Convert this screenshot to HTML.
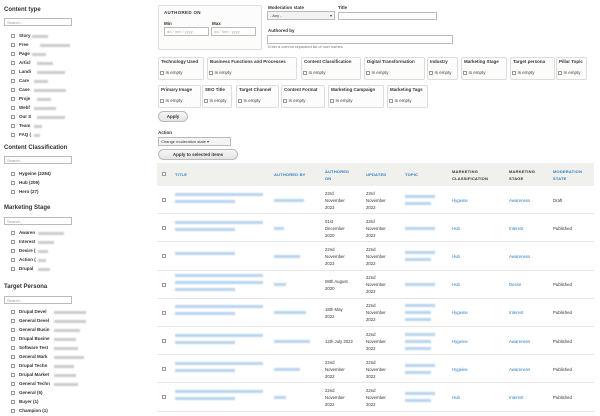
<!DOCTYPE html>
<html><head><meta charset="utf-8"><style>
*{margin:0;padding:0;box-sizing:border-box}
body{width:600px;height:416px;overflow:hidden;background:#fff;font-family:"Liberation Sans","DejaVu Sans",sans-serif;color:#222;position:relative}
.a{position:absolute;white-space:nowrap}
.h{font-weight:bold;font-size:6px;color:#333}
.s{font-size:4.5px}
.b{font-weight:bold;font-size:4.5px;color:#333}
.cb{position:absolute;width:4px;height:4px;border:0.6px solid #999;background:#fff}
.in{position:absolute;border:0.6px solid #bbb;background:#fff;font-size:4px;color:#999;padding:1px 2px}
.bl{position:absolute;background:#ccc;filter:blur(0.8px);height:3px}
.bb{position:absolute;background:#b8d5ee;filter:blur(0.8px);height:3px}
.fs{position:absolute;border:0.6px solid #ddd;border-radius:2px;background:#fcfcfa}
.btn{position:absolute;border:0.6px solid #bbb;border-radius:6px;background:linear-gradient(#f6f6f4,#e4e4e2);font-size:4.5px;font-weight:bold;text-align:center;color:#333}
.th{font-size:4px;font-weight:bold;color:#2b7dc4;letter-spacing:.2px}
.thk{font-size:4px;font-weight:bold;color:#333;letter-spacing:.2px}
.row{position:absolute;left:157px;width:437px;border-bottom:0.6px solid #e6e6e6}
.t{font-size:4.3px;color:#333;line-height:7px}
</style></head><body>

<div class="a h" style="left:4px;top:7px">Content type</div>
<div class="in" style="left:4px;top:18px;width:68px;height:8px">Search...</div>
<div class="a h" style="left:4px;top:145px">Content Classification</div>
<div class="in" style="left:4px;top:156px;width:68px;height:8px">Search...</div>
<div class="a h" style="left:4px;top:205px">Marketing Stage</div>
<div class="in" style="left:4px;top:217px;width:68px;height:8px">Search...</div>
<div class="a h" style="left:4px;top:284px">Target Persona</div>
<div class="in" style="left:4px;top:296px;width:68px;height:8px">Search...</div>

<div id="side"></div>

<div class="fs" style="left:158px;top:5px;width:104px;height:45px"></div>
<div class="a b" style="left:164px;top:10px;letter-spacing:.3px">AUTHORED ON</div>
<div class="a b" style="left:164px;top:21px">Min</div>
<div class="a b" style="left:212px;top:21px">Max</div>
<div class="in" style="left:164px;top:27px;width:45px;height:9px;color:#aaa">dd / mm / yyyy</div>
<div class="in" style="left:211px;top:27px;width:45px;height:9px;color:#aaa">dd / mm / yyyy</div>

<div class="a b" style="left:268px;top:5px">Moderation state</div>
<div class="in" style="left:267px;top:11px;width:68px;height:9px;color:#333;background:#f2f2f2">- Any -<span style="position:absolute;right:2px">▾</span></div>
<div class="a b" style="left:338px;top:5px">Title</div>
<div class="in" style="left:338px;top:12px;width:99px;height:8px"></div>
<div class="a b" style="left:268px;top:28px">Authored by</div>
<div class="in" style="left:267px;top:35px;width:186px;height:9px"></div>
<div class="a" style="left:268px;top:45px;font-size:3.8px;color:#777">Enter a comma separated list of user names.</div>

<div id="fl"></div>

<div class="btn" style="left:158px;top:111px;width:30px;height:11px;line-height:10px">Apply</div>
<div class="a b" style="left:158px;top:130px">Action</div>
<div class="in" style="left:158px;top:137px;width:73px;height:9px;color:#333;background:#f4f4f4">Change moderation state ▾</div>
<div class="btn" style="left:158px;top:149px;width:80px;height:11px;line-height:10px">Apply to selected items</div>

<div class="a" style="left:157px;top:163px;width:437px;height:23px;background:#f0f0ec"></div>
<div class="cb" style="left:162px;top:172px"></div>
<div class="a th" style="left:175px;top:172px">TITLE</div>
<div class="a th" style="left:274px;top:172px">AUTHORED BY</div>
<div class="a th" style="left:325px;top:168px;line-height:7px">AUTHORED<br>ON</div>
<div class="a th" style="left:366px;top:172px">UPDATED</div>
<div class="a th" style="left:405px;top:172px">TOPIC</div>
<div class="a thk" style="left:452px;top:168px;line-height:7px">MARKETING<br>CLASSIFICATION</div>
<div class="a thk" style="left:509px;top:168px;line-height:7px">MARKETING<br>STAGE</div>
<div class="a th" style="left:553px;top:168px;line-height:7px">MODERATION<br>STATE</div>

<div id="rows"></div>

<script>
var side=[[36,'Story',[32,16]],[45,'Free',[40,30]],[54,'Page',[32,14]],[63,'Articl',[37,16]],[72,'Landi',[37,28]],[81,'Care',[34,14]],[90,'Case',[34,32]],[99,'Proje',[37,14]],[108,'Webf',[34,22]],[117,'Our S',[37,28]],[126,'Team',[34,8]],[135,'FAQ (',[34,6]],
[174,'Hygeine (2284)'],[183,'Hub (209)'],[192,'Hero (27)'],
[233,'Awaren',[38,26]],[242,'Interest',[38,16]],[251,'Desire (',[38,10]],[260,'Action (',[38,8]],[269,'Drupal',[38,12]],
[312,'Drupal Devel',[54,32]],[321,'General Devel',[54,32]],[330,'General Busin',[54,26]],[339,'Drupal Busine',[54,22]],[348,'Software Test',[54,24]],[357,'General Mark',[54,30]],[366,'Drupal Techn',[54,20]],[375,'Drupal Market',[54,22]],[384,'General Techn',[54,24]],[393,'General (5)'],[402,'Buyer (1)'],[411,'Champion (1)']];
var h='';
side.forEach(function(s){h+='<div class="cb" style="left:11px;top:'+(s[0]-2)+'px"></div><div class="a b" style="left:19px;top:'+(s[0]-3)+'px">'+s[1]+'</div>';
if(s[2])h+='<div class="bl" style="left:'+s[2][0]+'px;top:'+(s[0]-1)+'px;width:'+s[2][1]+'px"></div>';});
document.getElementById('side').innerHTML=h;
var f=[[158,46,57,'Technology Used'],[207,90,57,'Business Functions and Processes'],[301,60,57,'Content Classification'],[364,61,57,'Digital Transformation'],[427,31,57,'Industry'],[461,46,57,'Marketing Stage'],[510,45,57,'Target persona'],[556,31,57,'Pillar Topic'],
[158,43,85,'Primary Image'],[202,30,85,'SEO Title'],[236,43,85,'Target Channel'],[281,44,85,'Content Format'],[328,56,85,'Marketing Campaign'],[387,41,85,'Marketing Tags']];
h='';
f.forEach(function(x){h+='<div class="fs" style="left:'+x[0]+'px;top:'+x[2]+'px;width:'+x[1]+'px;height:23px"></div><div class="a b" style="left:'+(x[0]+2)+'px;top:'+(x[2]+2)+'px;background:#fff;padding:0 1px;overflow:hidden;max-width:'+(x[1]-2)+'px">'+x[3]+'</div><div class="cb" style="left:'+(x[0]+2)+'px;top:'+(x[2]+14)+'px"></div><div class="a s" style="left:'+(x[0]+7.5)+'px;top:'+(x[2]+13)+'px;color:#444">Is empty</div>';});
document.getElementById('fl').innerHTML=h;
var r=[['23rd<br>November<br>2022','23rd<br>November<br>2022','Hygeine','Awareness','Draft',2,30,2],
['01st<br>December<br>2020','23rd<br>November<br>2022','Hub','Interest','Published',2,10,1],
['22nd<br>November<br>2022','22nd<br>November<br>2022','Hub','Awareness','',1,26,2],
['08th August<br>2020','22nd<br>November<br>2022','Hub','Desire','Published',3,12,1],
['18th May<br>2022','22nd<br>November<br>2022','Hygeine','Interest','Published',2,32,3],
['12th July 2022','22nd<br>November<br>2022','Hygeine','Awareness','Published',2,36,3],
['22nd<br>November<br>2022','22nd<br>November<br>2022','Hygeine','Awareness','Published',2,26,2],
['22nd<br>November<br>2022','22nd<br>November<br>2022','Hub','Interest','Published',2,12,2]];
h='';
r.forEach(function(x,i){var top=186+i*28.2,c=top+14;
h+='<div class="row" style="top:'+top+'px;height:28.2px"></div><div class="cb" style="left:162px;top:'+(c-2)+'px"></div>';
for(var k=0;k<x[5];k++)h+='<div class="bb" style="left:175px;top:'+(c-4-(x[5]-1)*3.5+k*7)+'px;width:'+(k==x[5]-1?60:88)+'px"></div>';
h+='<div class="bb" style="left:274px;top:'+(c-1.5)+'px;width:'+x[6]+'px"></div>';
for(var k=0;k<x[7];k++)h+='<div class="bb" style="left:405px;top:'+(c-1.5-(x[7]-1)*3.5+k*7)+'px;width:'+(k==0?30:26)+'px"></div>';
h+='<div class="a t" style="left:325px;top:'+(c-(x[0].split('<br>').length*3.5))+'px">'+x[0]+'</div>';
h+='<div class="a t" style="left:366px;top:'+(c-10.5)+'px">'+x[1]+'</div>';
h+='<div class="a t" style="left:452px;top:'+(c-3.5)+'px;color:#2b7dc4">'+x[2]+'</div>';
h+='<div class="a t" style="left:509px;top:'+(c-3.5)+'px;color:#2b7dc4">'+x[3]+'</div>';
h+='<div class="a t" style="left:553px;top:'+(c-3.5)+'px">'+x[4]+'</div>';});
document.getElementById('rows').innerHTML=h;
</script>
</body></html>
